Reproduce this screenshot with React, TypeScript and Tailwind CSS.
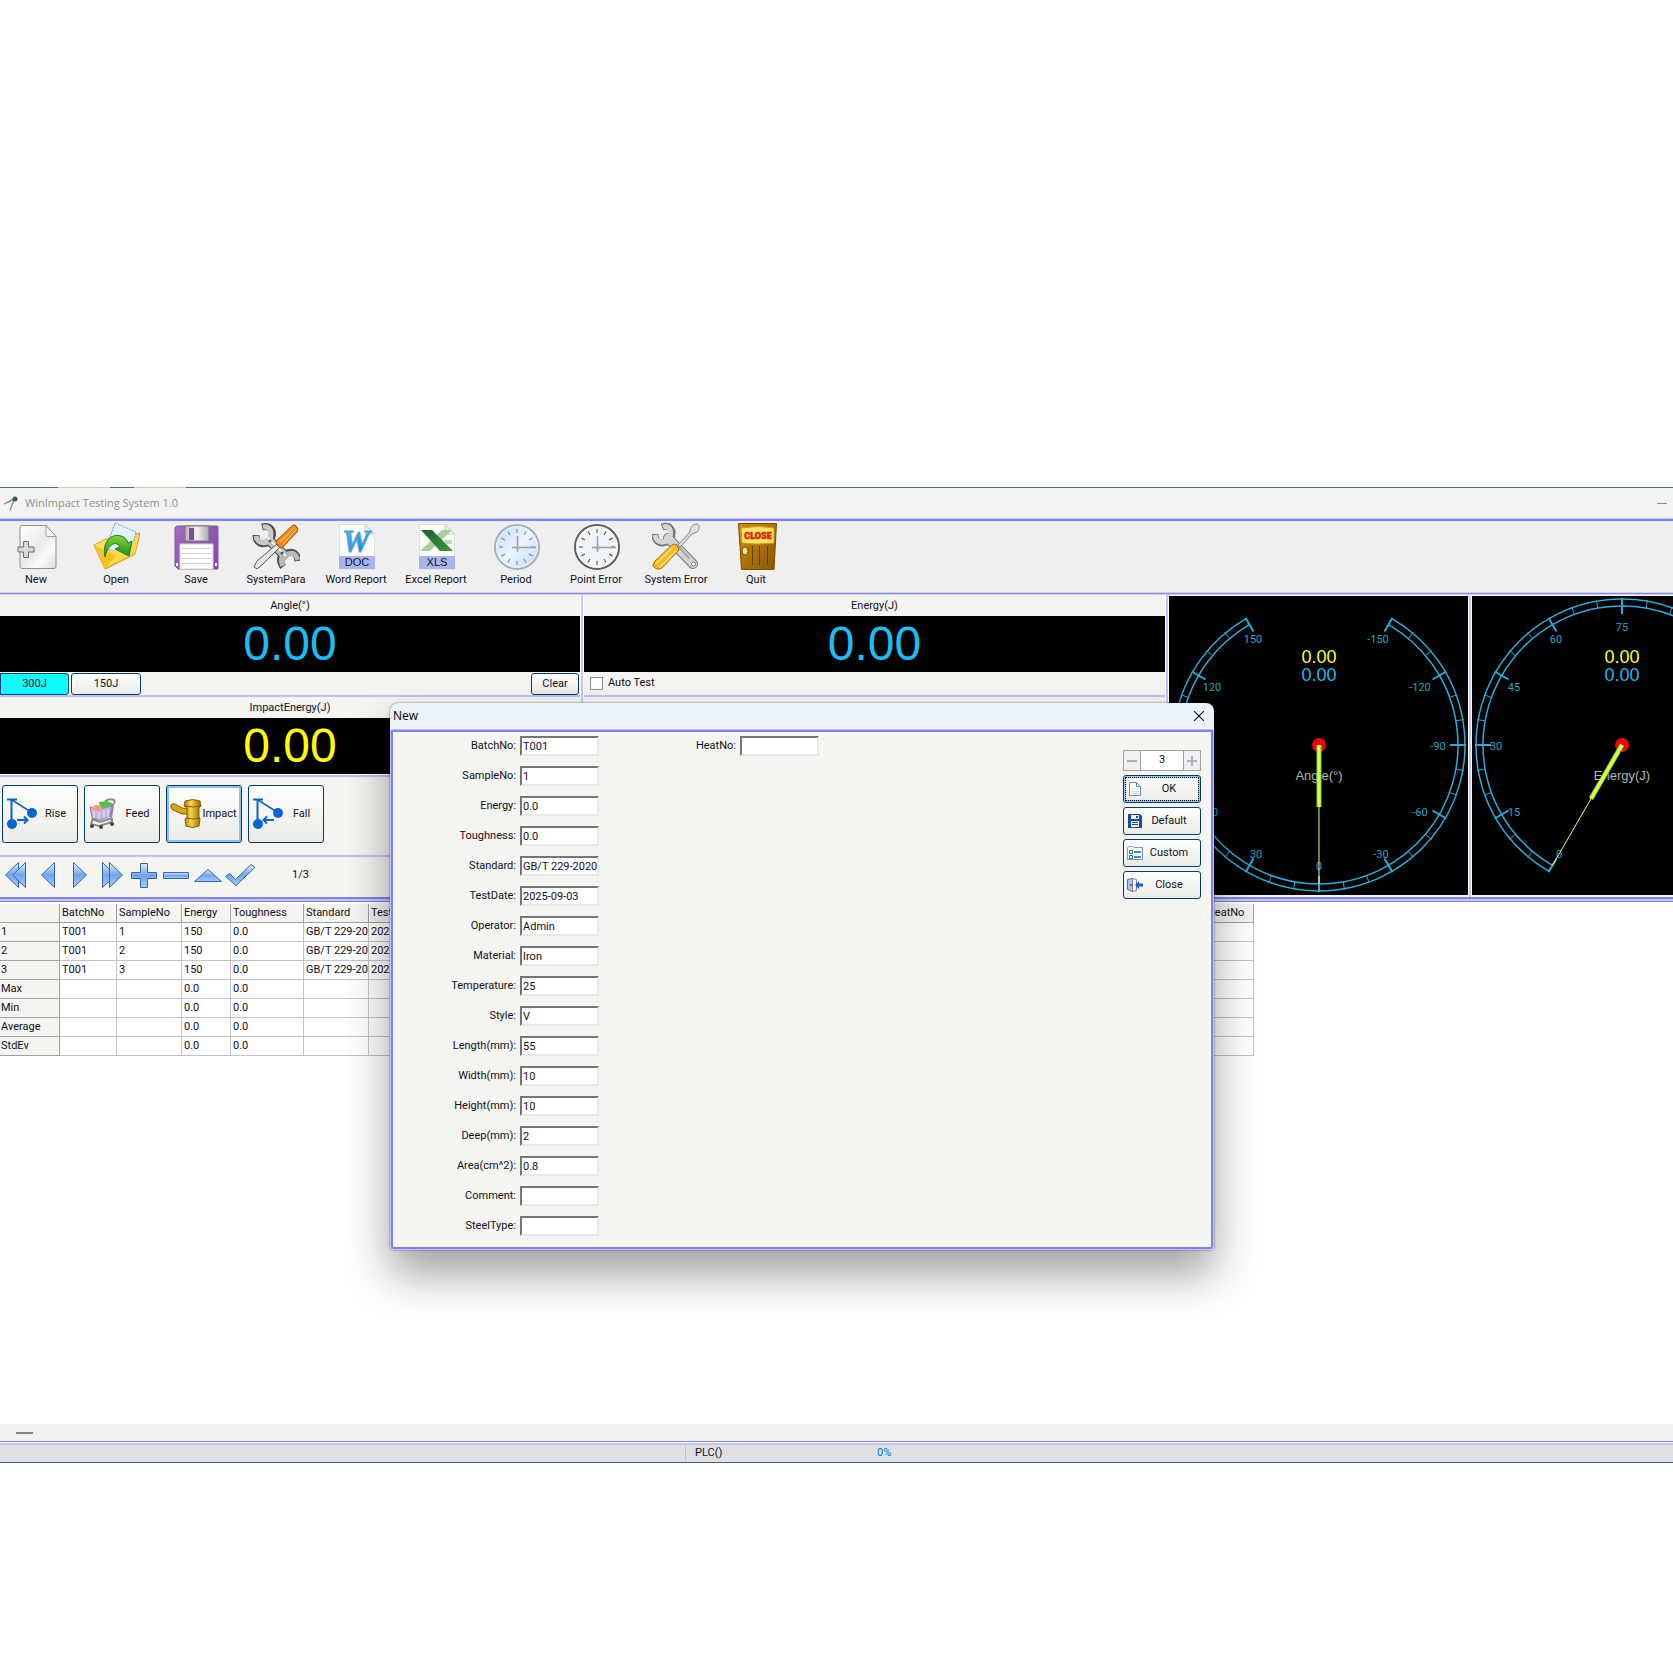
import type { ReactNode } from 'react';

const fields = [
  { label: 'BatchNo', value: 'T001' },
  { label: 'SampleNo', value: '1' },
  { label: 'Energy', value: '0.0' },
  { label: 'Toughness', value: '0.0' },
  { label: 'Standard', value: 'GB/T 229-2020' },
  { label: 'TestDate', value: '2025-09-03' },
  { label: 'Operator', value: 'Admin' },
  { label: 'Material', value: 'Iron' },
  { label: 'Temperature', value: '25' },
  { label: 'Style', value: 'V' },
  { label: 'Length(mm)', value: '55' },
  { label: 'Width(mm)', value: '10' },
  { label: 'Height(mm)', value: '10' },
  { label: 'Deep(mm)', value: '2' },
  { label: 'Area(cm^2)', value: '0.8' },
  { label: 'Comment', value: '' },
  { label: 'SteelType', value: '' },
];

const columns = [
  { name: '', width: 60 },
  { name: 'BatchNo', width: 57 },
  { name: 'SampleNo', width: 65 },
  { name: 'Energy', width: 49 },
  { name: 'Toughness', width: 73 },
  { name: 'Standard', width: 65 },
  { name: 'TestDate', width: 70 },
  { name: 'Operator', width: 70 },
  { name: 'Material', width: 70 },
  { name: 'Temperature', width: 70 },
  { name: 'Style', width: 70 },
  { name: 'Length(mm)', width: 70 },
  { name: 'Width(mm)', width: 70 },
  { name: 'Height(mm)', width: 70 },
  { name: 'Deep(mm)', width: 69 },
  { name: 'Area(cm^2)', width: 69 },
  { name: 'Comment', width: 69 },
  { name: 'SteelType', width: 69 },
  { name: 'HeatNo', width: 49 },
];

const sampleRow = (no: string) => [
  no, 'T001', no, '150', '0.0', 'GB/T 229-2020', '2025-09-03', 'Admin', 'Iron', '25', 'V', '55', '10', '10', '2', '0.8', '', '', '',
];
const statRow = (name: string) => [name, '', '', '0.0', '0.0', '', '', '', '', '', '', '', '', '', '', '', '', '', ''];

const rows = [
  sampleRow('1'),
  sampleRow('2'),
  sampleRow('3'),
  statRow('Max'),
  statRow('Min'),
  statRow('Average'),
  statRow('StdEv'),
];

/* ---------- Toolbar icons ---------- */

const NewIcon = () => (
  <svg width="48" height="48" viewBox="0 0 48 48">
    <defs>
      <linearGradient id="newPage" x1="0" y1="0" x2="1" y2="1">
        <stop offset="0" stopColor="#ffffff" />
        <stop offset="0.5" stopColor="#e9e9e9" />
        <stop offset="0.7" stopColor="#fbfbfb" />
        <stop offset="1" stopColor="#dcdcdc" />
      </linearGradient>
    </defs>
    <path d="M10 3.500h24l10 11v30a2 2 0 0 1-2 2H10a2 2 0 0 1-2-2v-39a2 2 0 0 1 2-2z" fill="url(#newPage)" stroke="#8f8f8f" />
    <path d="M34 3.500v9q0 2 2 2h8z" fill="#f8f8f8" stroke="#9a9a9a" />
    <path d="M11.500 19.500h5v5.500h5.500v5h-5.500v5.500h-5v-5.500H6v-5h5.500z" fill="#dadada" stroke="#6d6d6d" />
  </svg>
);

const OpenIcon = () => (
  <svg width="48" height="48" viewBox="0 0 48 48">
    <defs>
      <linearGradient id="openFolder" x1="0" y1="0" x2="1" y2="1">
        <stop offset="0" stopColor="#ffef8a" />
        <stop offset="0.6" stopColor="#fcd12c" />
        <stop offset="1" stopColor="#f0a814" />
      </linearGradient>
      <linearGradient id="openArrow" x1="0" y1="0" x2="0" y2="1">
        <stop offset="0" stopColor="#7fd63a" />
        <stop offset="1" stopColor="#1f8c1c" />
      </linearGradient>
    </defs>
    <path d="M2 23L14 17 40 13 48 11 43 32 13 47z" fill="url(#openFolder)" stroke="#d79a1c" />
    <path d="M23 1L44 10 38 33 14 27z" fill="#e4f2fd" stroke="#63a3d8" strokeDasharray="2 1" />
    <path d="M12 30L38 26 47 11 43 33 13 47 8 34z" fill="#fbd94e" opacity="0.9" />
    <path d="M2 23L13 47 24 34z" fill="#f9c21e" />
    <path d="M13 47L43 32" stroke="#d79a1c" fill="none" />
    <path d="M13 35C10 20 19 11 29 14c4 1 6 4 7 7l4-2-3 15-14-7 5-2c-4-7-12-3-15 10z" fill="url(#openArrow)" stroke="#1c7a18" />
  </svg>
);

const SaveIcon = () => (
  <svg width="48" height="48" viewBox="0 0 48 48">
    <defs>
      <linearGradient id="saveBody" x1="0" y1="0" x2="1" y2="1">
        <stop offset="0" stopColor="#a06cc0" />
        <stop offset="1" stopColor="#8347ab" />
      </linearGradient>
      <linearGradient id="saveShutter" x1="0" y1="0" x2="1" y2="0">
        <stop offset="0" stopColor="#b5b5b5" />
        <stop offset="0.5" stopColor="#f4f4f4" />
        <stop offset="1" stopColor="#a9a9a9" />
      </linearGradient>
    </defs>
    <path d="M3 5.500L5 4h40a1 1 0 0 1 1 1v42H6l-3-3z" fill="url(#saveBody)" stroke="#8450a8" />
    <rect x="13" y="4" width="24" height="15" fill="url(#saveShutter)" stroke="#777" />
    <rect x="17" y="6" width="5" height="12" fill="#7c4f9c" />
    <rect x="8" y="22" width="33" height="25" fill="#fff" stroke="#d9cfe2" />
    <path d="M10 26.500h29M10 31.500h29M10 36.500h29M10 41.500h29" stroke="#d0d0da" />
    <rect x="4" y="41" width="2" height="3" fill="#fff" />
    <rect x="43" y="41" width="2" height="3" fill="#fff" />
  </svg>
);

const SystemParaIcon = () => (
  <svg width="48" height="48" viewBox="0 0 48 48">
    <g fill="none" strokeLinecap="butt">
      <path d="M15 16L35 36" stroke="#4c4c4c" strokeWidth="10" />
      <path d="M4 13C4 21 10 24 17 20M10 5C18 3 23 9 19 17" stroke="#4c4c4c" strokeWidth="7" />
      <path d="M31 45C26 38 29 30 36 31M46 39C45 31 41 29 36 31" stroke="#4c4c4c" strokeWidth="7" />
      <path d="M15 16L35 36" stroke="#bdbdbd" strokeWidth="8" />
      <path d="M4 14C5 20 11 23 17 19M11 5C17 4 21 9 18 17" stroke="#c9c9c9" strokeWidth="5" />
      <path d="M31 44C28 38 29 32 36 32M46 38C44 32 41 30 36 32" stroke="#b8b8b8" strokeWidth="5" />
      <path d="M14 14L34 34" stroke="#efefef" strokeWidth="2" />
      <circle cx="18" cy="19" r="1.500" fill="#555" />
      <circle cx="30" cy="31" r="1.500" fill="#555" />
    </g>
    <path d="M25 22l3 3L10 43l-5 4-3-2 3-6z" fill="#e6e6e6" stroke="#5b5b5b" />
    <path d="M24 19L40 4c2-3 8 2 5 6L30 26q-5-1-6-7z" fill="#f08a1d" stroke="#9c4d08" />
    <path d="M28 20L42 6M30 23L44 8" stroke="#ffc77a" strokeWidth="1" />
  </svg>
);

const SheetIcon = ({ kind }: { kind: 'DOC' | 'XLS' }) => (
  <svg width="48" height="48" viewBox="0 0 48 48">
    <defs>
      <linearGradient id="wordBlue" x1="0" y1="0" x2="1" y2="1">
        <stop offset="0" stopColor="#5fc0ea" />
        <stop offset="1" stopColor="#1670b8" />
      </linearGradient>
      <linearGradient id="excelGreen" x1="0" y1="0" x2="1" y2="1">
        <stop offset="0" stopColor="#1f5f2c" />
        <stop offset="1" stopColor="#3f9a3c" />
      </linearGradient>
    </defs>
    <path d="M7.500 2.500H33L42.500 12v35h-35z" fill="#fdfdfd" stroke="#e0e0e6" />
    <path d="M33 2.500V12h9.500z" fill="#f0f0f0" stroke="#cfcfcf" />
    {kind === 'DOC' ? (
      <text x="24" y="30" textAnchor="middle" fontFamily="Liberation Serif, serif" fontStyle="italic" fontWeight="700" fontSize="31" fill="url(#wordBlue)" stroke="#4aa8dc">
        W
      </text>
    ) : (
      <g>
        <path d="M30 8h10L18 29H8z" fill="#a9cf9f" />
        <path d="M9 8h11l21 21H28z" fill="url(#excelGreen)" />
        <path d="M31 18l9 0 0 4-6 0z" fill="#bcdcb2" />
      </g>
    )}
    <rect x="7" y="34" width="36" height="13" fill="#a9b5ea" />
    <text x="25" y="44" textAnchor="middle" fontFamily="Liberation Sans, sans-serif" fontSize="11" fill="#101028">
      {kind}
    </text>
  </svg>
);

const ClockIcon = ({ face, rim, tick, id }: { face: string; rim: string; tick: string; id: string }) => (
  <svg width="48" height="48" viewBox="0 0 48 48">
    <defs>
      <linearGradient id={id} x1="0" y1="0" x2="1" y2="1">
        <stop offset="0" stopColor={face} />
        <stop offset="0.5" stopColor="#eef4fb" />
        <stop offset="1" stopColor={face} />
      </linearGradient>
    </defs>
    <circle cx="25" cy="25" r="22" fill={`url(#${id})`} stroke={rim} strokeWidth="2" />
    <circle cx="25" cy="25" r="20.500" fill="none" stroke="#fff" strokeOpacity="0.6" />
    {[0, 30, 60, 90, 120, 150, 180, 210, 240, 270, 300, 330].map((deg) => (
      <line key={deg} x1="25" y1="7" x2="25" y2="11" stroke={tick} transform={`rotate(${deg} 25 25)`} />
    ))}
    <path d="M25.500 14v16M20 25.500h24" stroke="#9a9ea6" strokeWidth="1.500" fill="none" />
    <circle cx="25.500" cy="25.500" r="2" fill="#a8adb5" />
  </svg>
);

const SystemErrorIcon = () => (
  <svg width="48" height="48" viewBox="0 0 48 48">
    <g fill="none">
      <path d="M16 16L41 42" stroke="#777" strokeWidth="10" strokeLinecap="round" />
      <path d="M3 12C3 21 10 23 17 19M10 5C18 2 23 9 18 17" stroke="#777" strokeWidth="7" />
      <path d="M16 16L41 42" stroke="#d2d2d2" strokeWidth="8" strokeLinecap="round" />
      <path d="M3 13C4 20 10 22 17 18M11 5C17 3 21 9 17 17" stroke="#d6d6d6" strokeWidth="5" />
      <path d="M24 22L37 36" stroke="#a5a5a5" strokeWidth="2" />
      <circle cx="41.500" cy="42" r="2" fill="#fff" stroke="#777" />
    </g>
    <path d="M26 23L38 10c0-5 3-8 7-8 3 1 3 5 0 8l-5 2-12 13z" fill="#e0e0e0" stroke="#888" />
    <path d="M21 22q5 0 6 6L10 46q-5 3-9-2 0-3 2-5z" fill="#f9b81c" stroke="#a97208" />
    <path d="M20 26L4 42M24 29L8 45" stroke="#ffe08a" strokeWidth="1.500" />
  </svg>
);

const QuitIcon = () => (
  <svg width="48" height="48" viewBox="0 0 48 48">
    <defs>
      <linearGradient id="door" x1="0" y1="0" x2="1" y2="1">
        <stop offset="0" stopColor="#cf8d10" />
        <stop offset="1" stopColor="#8a5604" />
      </linearGradient>
    </defs>
    <path d="M6.500 1.500h38L42 47.500H9.500z" fill="url(#door)" stroke="#7a4a05" />
    <path d="M9 6q17-3 33 0v15q-17 2-32 0z" fill="#ffe66b" stroke="#d99a10" />
    <path d="M20.500 24v19M27.500 24v19M35.500 24v19" stroke="#5e3a02" />
    <ellipse cx="13" cy="29" rx="3" ry="4" fill="#ffe48a" stroke="#7a4a05" />
    <text x="26" y="17" textAnchor="middle" fontFamily="Roboto, sans-serif" fontWeight="900" fontSize="9" fill="#e0240a" stroke="#e0240a" strokeWidth="0.500">
      CLOSE
    </text>
  </svg>
);

const tools: { label: string; icon: ReactNode }[] = [
  { label: 'New', icon: <NewIcon /> },
  { label: 'Open', icon: <OpenIcon /> },
  { label: 'Save', icon: <SaveIcon /> },
  { label: 'SystemPara', icon: <SystemParaIcon /> },
  { label: 'Word Report', icon: <SheetIcon kind="DOC" /> },
  { label: 'Excel Report', icon: <SheetIcon kind="XLS" /> },
  { label: 'Period', icon: <ClockIcon id="clockBlue" face="#b9dafb" rim="#a3b0bf" tick="#5b87b8" /> },
  { label: 'Point Error', icon: <ClockIcon id="clockGrey" face="#f6f6f6" rim="#5f5f5f" tick="#444444" /> },
  { label: 'System Error', icon: <SystemErrorIcon /> },
  { label: 'Quit', icon: <QuitIcon /> },
];

/* ---------- Action button icons ---------- */

const PendulumIcon = ({ down }: { down?: boolean }) => (
  <svg width="32" height="32" viewBox="0 0 32 32" className="shrink-0">
    <path d="M1 1.500h10" stroke="#0a64c8" strokeWidth="2" />
    <path d="M5.500 2v24" stroke="#0a64c8" strokeWidth="2" />
    <path d="M6 2L25 14" stroke="#0a64c8" strokeWidth="1.500" />
    <circle cx="26" cy="15" r="5" fill="#0a64d2" />
    <circle cx="6" cy="26" r="5" fill="#0a64d2" />
    {down ? (
      <path d="M22 22H12M15 18.500L11.500 22l3.500 3.500" fill="none" stroke="#0a64c8" strokeWidth="2" />
    ) : (
      <path d="M11 22h10M18 18.500l3.500 3.500-3.500 3.500" fill="none" stroke="#0a64c8" strokeWidth="2" />
    )}
  </svg>
);

const FeedIcon = () => (
  <svg width="32" height="32" viewBox="0 0 32 32" className="shrink-0">
    <path d="M17 3q5-3 9-1 2 3-2 5" fill="none" stroke="#8e8e8e" strokeWidth="2" />
    <path d="M11 4l8-1 5 2-1 8-10 1z" fill="#54c63e" />
    <path d="M2 9l9 2 12-3 1-2-2 12-10 4-8-2z" fill="#c0b4e4" stroke="#8f7fc0" />
    <ellipse cx="9" cy="10" rx="5" ry="3" fill="#f5a26a" />
    <path d="M6 13v7M11 14v7M16 12v8M20 11v8" stroke="#efe9fc" />
    <path d="M25 7l-2 13M4 21l8 3 12-4M3 26l8 2 13-4M5 20l-2 6M24 20v4" fill="none" stroke="#8a8a8a" strokeWidth="2" />
    <circle cx="4" cy="28" r="2" fill="#444" />
    <circle cx="13" cy="29" r="2" fill="#444" />
    <circle cx="24" cy="26" r="2" fill="#444" />
  </svg>
);

const HammerIcon = () => (
  <svg width="32" height="32" viewBox="0 0 32 32" className="shrink-0">
    <defs>
      <linearGradient id="gold" x1="0" y1="0" x2="1" y2="0">
        <stop offset="0" stopColor="#a87400" />
        <stop offset="0.4" stopColor="#f6d64c" />
        <stop offset="1" stopColor="#9a6600" />
      </linearGradient>
    </defs>
    <path d="M1 7q-1 4 2 5l9 4 6 0v-5l-6-1-7-4q-3-1-4 1z" fill="#d9a514" stroke="#8a5f00" />
    <path d="M15 3q8-3 15 0l1 5-2 2v9l1 2-1 7q-6 3-13 0l-1-7 2-2v-9l-3-2z" fill="url(#gold)" stroke="#8a5f00" />
    <path d="M15 8q8 2 16 0M16 20q7 2 14 0" fill="none" stroke="#8a5f00" />
  </svg>
);

const actions = [
  { label: 'Rise', icon: <PendulumIcon />, active: false },
  { label: 'Feed', icon: <FeedIcon />, active: false },
  { label: 'Impact', icon: <HammerIcon />, active: true },
  { label: 'Fall', icon: <PendulumIcon down />, active: false },
];

/* ---------- Record navigator ---------- */

const navShapes = [
  { label: 'First', d: ['M18.500 2.500v25L5.500 15z', 'M25.500 2.500v25L12.500 15z'] },
  { label: 'Previous', d: ['M22.500 2.500v25L9.500 15z'] },
  { label: 'Next', d: ['M9.500 2.500v25L22.500 15z'] },
  { label: 'Last', d: ['M6.500 2.500v25L19.500 15z', 'M13.500 2.500v25L26.500 15z'] },
  { label: 'Add', d: ['M12.500 3.500h7v9h9v6h-9v9h-7v-9h-9v-6h9z'] },
  { label: 'Remove', d: ['M3.500 12.500h25v6h-25z'] },
  { label: 'Edit', d: ['M2.500 21.500L16 9.500l13.500 12z'] },
  { label: 'Apply', d: ['M1.500 16.500l4-3 6 6L27 4.500l4 3-19 18z'] },
];

const NavIcon = ({ shapes }: { shapes: string[] }) => (
  <svg width="32" height="30" viewBox="0 0 32 30">
    <defs>
      <linearGradient id="navFill" x1="0" y1="0" x2="0" y2="1">
        <stop offset="0" stopColor="#e3f0fd" />
        <stop offset="0.5" stopColor="#6ea6ec" />
        <stop offset="1" stopColor="#a9cdf6" />
      </linearGradient>
    </defs>
    {shapes.map((d) => (
      <path key={d} d={d} fill="url(#navFill)" stroke="#3564b4" strokeLinejoin="round" />
    ))}
  </svg>
);

/* ---------- Gauges ---------- */

type GaugeLabel = { text: string; x: number; y: number };

const angleLabels: GaugeLabel[] = [
  { text: '150', x: 84, y: 44 },
  { text: '120', x: 43, y: 92 },
  { text: '90', x: 30, y: 151 },
  { text: '60', x: 43, y: 217 },
  { text: '30', x: 87, y: 259 },
  { text: '0', x: 150, y: 271 },
  { text: '-30', x: 212, y: 259 },
  { text: '-60', x: 251, y: 217 },
  { text: '-90', x: 269, y: 151 },
  { text: '-120', x: 251, y: 92 },
  { text: '-150', x: 209, y: 44 },
];

const energyLabels: GaugeLabel[] = [
  { text: '0', x: 87, y: 259 },
  { text: '15', x: 42, y: 217 },
  { text: '30', x: 24, y: 151 },
  { text: '45', x: 42, y: 92 },
  { text: '60', x: 84, y: 44 },
  { text: '75', x: 150, y: 32 },
];

const CX = 150;
const CY = 149;

// degrees run clockwise from the bottom of the dial
const polar = (radius: number, deg: number) => {
  const rad = (deg * Math.PI) / 180;
  return { x: CX - radius * Math.sin(rad), y: CY + radius * Math.cos(rad) };
};

const arc = (radius: number, from: number, to: number) => {
  const a = polar(radius, from);
  const b = polar(radius, to);
  return `M${a.x} ${a.y}A${radius} ${radius} 0 ${to - from > 180 ? 1 : 0} 1 ${b.x} ${b.y}`;
};

const Gauge = ({ title, from, needle, labels }: { title: string; from: number; needle: number; labels: GaugeLabel[] }) => {
  const ticks = Array.from({ length: 31 }, (_, i) => from + i * 10);
  const mid = polar(62, needle);
  const tip = polar(139, needle);

  return (
    <svg width="299" height="299" viewBox="0 0 299 299" className="block shrink-0 bg-black" role="img" aria-label={title}>
      <g fill="none" stroke="#2cacdc">
        <path d={arc(146, from, from + 300)} strokeWidth="1.500" />
        <path d={arc(139, from, from + 300)} strokeWidth="1.500" />
        {ticks.map((deg, i) => {
          const major = i % 3 === 0;
          const a = polar(major ? 131 : 139, deg);
          const b = polar(147, deg);
          return <line key={deg} x1={a.x} y1={a.y} x2={b.x} y2={b.y} strokeWidth={major ? 2 : 1} />;
        })}
      </g>
      <g fontFamily="Roboto, sans-serif" fontSize="11" fill="#28a4c8" textAnchor="middle">
        {labels.map((l) => (
          <text key={l.text} x={l.x} y={l.y + 3}>
            {l.text}
          </text>
        ))}
      </g>
      <g fontFamily="Liberation Sans, Arial, sans-serif" textAnchor="middle">
        <text x="150" y="67" fontSize="18" fill="#ffff20">0.00</text>
        <text x="150" y="85" fontSize="18" fill="#20b8ec">0.00</text>
        <text x="150" y="184" fontSize="13" fill="#b4b4b4">{title}</text>
      </g>
      <circle cx={CX} cy={CY} r="7" fill="#f00808" />
      <line x1={CX} y1={CY} x2={tip.x} y2={tip.y} stroke="#f8f868" />
      <line x1={CX} y1={CY} x2={mid.x} y2={mid.y} stroke="#50d890" strokeWidth="5" />
      <line x1={CX} y1={CY} x2={mid.x} y2={mid.y} stroke="#f0ff20" strokeWidth="3" />
    </svg>
  );
};

/* ---------- Small building blocks ---------- */

const HLine = () => <div className="h-0.5 bg-[#c0c0fa]" />;

const VLine = () => <div className="w-1 shrink-0 border-x border-white bg-[#c6c4f6]" />;

const Readout = ({ label, value, color }: { label: string; value: string; color: string }) => (
  <div>
    <div className="h-[21px] text-center leading-[22px]">{label}</div>
    <div className={`h-14 bg-black text-center font-['Liberation_Sans',Arial,sans-serif] text-5xl leading-[56px] ${color}`}>{value}</div>
  </div>
);

const buttonBase = 'rounded-[3px] border border-[#003c74] bg-linear-to-b from-white to-[#ebeae5]';

/* ---------- Dialog ---------- */

const PageIcon = () => (
  <svg width="14" height="16" viewBox="0 0 14 16">
    <path d="M1.500 1.500h7l4 4v9h-11z" fill="#fff" stroke="#5b8fc6" />
    <path d="M8.500 1.500v4h4" fill="none" stroke="#5b8fc6" />
    <path d="M3 8h8M3 10.500h8M3 12.500h8" stroke="#d2dfee" />
  </svg>
);

const DiskIcon = () => (
  <svg width="14" height="14" viewBox="0 0 14 14">
    <path d="M0 0h12l2 2v12H0z" fill="#0c4fb0" />
    <rect x="3" y="1" width="8" height="4" fill="#fff" />
    <rect x="8" y="2" width="2" height="2" fill="#0c4fb0" />
    <rect x="3" y="7" width="8" height="6" fill="#fff" />
    <path d="M4 8.500h6M4 10.500h6" stroke="#0c4fb0" />
  </svg>
);

const FormIcon = () => (
  <svg width="16" height="16" viewBox="0 0 16 16">
    <path d="M.5 14.500v-12l2-1h3l2 1h8v12z" fill="#f4f9ff" stroke="#6d9ccb" />
    <rect x="2.500" y="5.500" width="3" height="3" fill="#fff" stroke="#3b74ad" />
    <rect x="2.500" y="10.500" width="3" height="3" fill="#fff" stroke="#3b74ad" />
    <path d="M7 7h7M7 12h7" stroke="#2a5f98" strokeWidth="1.500" />
  </svg>
);

const ExitIcon = () => (
  <svg width="16" height="16" viewBox="0 0 16 16">
    <path d="M.5 2.500l5-1v13l-5-2z" fill="#a9c6e6" stroke="#4b77a8" />
    <path d="M5.500 1.500l4 1v11l-4 1z" fill="#fff6dc" stroke="#8c7ab0" />
    <circle cx="4" cy="8" r="1" fill="#2b4f7c" />
    <path d="M8 8l4-4v2.500h4v3h-4V12z" fill="#0a62c4" />
  </svg>
);

const dialogButtons = [
  { label: 'OK', icon: <PageIcon />, focused: true },
  { label: 'Default', icon: <DiskIcon />, focused: false },
  { label: 'Custom', icon: <FormIcon />, focused: false },
  { label: 'Close', icon: <ExitIcon />, focused: false },
];

const Field = ({ label, value }: { label: string; value: string }) => (
  <div className="flex h-5 w-[220px] items-center gap-1">
    <label htmlFor={label} className="w-[123px] text-right">
      {label}:
    </label>
    <input
      id={label}
      defaultValue={value}
      className="h-5 w-[79px] border-2 border-t-[#757575] border-r-[#e8e8e8] border-b-[#e8e8e8] border-l-[#757575] bg-white pl-px outline-none"
    />
  </div>
);

const NewDialog = () => (
  <div
    role="dialog"
    aria-label="New"
    className="absolute top-[216px] left-[390px] w-[824px] rounded-t-lg rounded-b-[4px] bg-[#ebf3f8] shadow-[0_24px_46px_rgba(0,0,0,0.38),0_0_2px_rgba(0,0,0,0.6)]"
  >
    <div className="flex h-[26px] items-center justify-between pr-2.5 pl-[3px] font-['Open_Sans',sans-serif] text-xs text-black">
      <span>New</span>
      <button aria-label="Close dialog">
        <svg width="10" height="10" viewBox="0 0 10 10">
          <path d="M0 0l10 10M10 0L0 10" stroke="#111" strokeWidth="1.200" />
        </svg>
      </button>
    </div>
    <div className="rounded-b-[4px] border border-[#c0c0fa]">
      <div className="flex justify-between rounded-b-[3px] border-2 border-[#8080ee] bg-[#f4f4f0] pb-[11px]">
        <div className="flex pt-1">
          <div className="flex flex-col gap-2.5">
            {fields.map((f) => (
              <Field key={f.label} {...f} />
            ))}
          </div>
          <Field label="HeatNo" value="" />
        </div>

        {/* Spinner and dialog actions */}
        <div className="mr-2.5 flex w-[78px] flex-col gap-1 pt-[18px]">
          <div className="flex h-[21px] border border-[#a0a0a0] bg-[#f0f0f0]">
            <button aria-label="Decrease" className="flex w-4 items-center justify-center">
              <span className="h-0.5 w-2.5 bg-[#9ab4cc]" />
            </button>
            <input aria-label="Count" defaultValue="3" className="w-11 flex-1 border-x border-[#a0a0a0] bg-white text-center outline-none" />
            <button aria-label="Increase" className="flex w-4 items-center justify-center">
              <svg width="10" height="10" viewBox="0 0 10 10">
                <path d="M0 5h10M5 0v10" stroke="#9ab4cc" strokeWidth="2" />
              </svg>
            </button>
          </div>
          {dialogButtons.map((b) => (
            <button
              key={b.label}
              className={`${buttonBase} flex h-7 items-center ${b.focused ? 'shadow-[inset_0_0_0_2px_#9cc4ee] outline-1 -outline-offset-3 outline-dotted outline-black' : ''}`}
            >
              <span className="flex w-[22px] items-center justify-center">{b.icon}</span>
              <span className="flex-1 pr-2 text-center">{b.label}</span>
            </button>
          ))}
        </div>
      </div>
    </div>
  </div>
);

/* ---------- Main window ---------- */

const App = () => {
  return (
    <div className="min-h-screen overflow-hidden bg-white pt-[487px] font-['Roboto',sans-serif] text-[11px] text-[#101018]">
      <div className="relative">
        {/* Title bar */}
        <div className="flex h-px bg-[#3f7590]">
          <span className="ml-[58px] w-[52px] bg-[#dcc9a4]" />
          <span className="ml-6 w-[52px] bg-[#dcc9a4]" />
        </div>
        <header className="flex h-[30px] items-center gap-[7px] bg-[#f3f3f3] pr-1.5 pl-1 font-['Open_Sans',sans-serif] text-[#8e8e8e]">
          <svg width="14" height="14" viewBox="0 0 14 14">
            <path d="M0 8L10 3M10 4L6 14" stroke="#8890a0" strokeWidth="1.500" fill="none" />
            <circle cx="11" cy="3" r="2.500" fill="#2c6c3c" />
          </svg>
          <span className="flex-1">WinImpact Testing System 1.0</span>
          <button aria-label="Minimize" className="h-px w-2.5 bg-[#8e8e8e]" />
        </header>
        <div className="h-[3px] border-t border-[#c0c0fa] bg-[#8080ee]" />

        {/* Toolbar */}
        <nav className="flex h-[71px] gap-2 bg-[#efefef] pt-px">
          {tools.map((t) => (
            <button key={t.label} className="flex w-[72px] flex-col items-center whitespace-nowrap">
              {t.icon}
              <span className="leading-5">{t.label}</span>
            </button>
          ))}
        </nav>
        <div className="h-[3px] border-y border-[#d0d0fa] bg-[#8a88e6]" />

        {/* Readouts, actions and gauges */}
        <section className="flex h-[302px] overflow-hidden bg-[#f4f4f0]">
          <div className="flex flex-1">
            <div className="flex-[580]">
              <Readout label="Angle(°)" value="0.00" color="text-[#1cbcf4]" />
              <div className="flex h-[23px] items-end gap-0.5 pr-px">
                <button className="h-[22px] w-[69px] rounded-r-[3px] border border-[#003c74] bg-[#10fcfc]">300J</button>
                <button className={`${buttonBase} h-[22px] w-[70px]`}>150J</button>
                <button className={`${buttonBase} ml-auto h-[22px] w-12`}>Clear</button>
              </div>
              <HLine />
              <Readout label="ImpactEnergy(J)" value="0.00" color="text-[#ffff00]" />
              <div className="h-px bg-white" />
              <HLine />
              <div className="flex h-[78px] gap-1.5 pt-2 pl-0.5">
                {actions.map((a) => (
                  <button
                    key={a.label}
                    className={`${buttonBase} flex h-[58px] w-[76px] items-center pl-[3px] ${a.active ? 'shadow-[inset_0_0_0_2px_#8cc0ee]' : ''}`}
                  >
                    {a.icon}
                    <span className="flex-1 pr-1 text-center">{a.label}</span>
                  </button>
                ))}
              </div>
              <HLine />
              <div className="flex h-9 items-center">
                {navShapes.map((n) => (
                  <button key={n.label} aria-label={n.label}>
                    <NavIcon shapes={n.d} />
                  </button>
                ))}
                <span className="ml-9">1/3</span>
              </div>
            </div>
            <VLine />
            <div className="flex-[581]">
              <Readout label="Energy(J)" value="0.00" color="text-[#1cbcf4]" />
              <label className="flex h-[23px] items-center gap-[5px] pl-1.5">
                <input type="checkbox" className="size-[13px] appearance-none border border-[#8e8f8f] bg-white" />
                Auto Test
              </label>
              <HLine />
            </div>
            <VLine />
          </div>
          <div className="flex pt-px">
            <Gauge title="Angle(°)" from={-150} needle={0} labels={angleLabels} />
            <VLine />
            <div className="w-[201px] overflow-hidden">
              <Gauge title="Energy(J)" from={30} needle={30} labels={energyLabels} />
            </div>
          </div>
        </section>
        <div className="h-[5px] border-t-2 border-b border-t-[#8080ee] border-b-[#8080ee] bg-[#c8c8fc]" />
        <div className="h-0.5 bg-white" />

        {/* Results table */}
        <section className="min-h-[520px] overflow-hidden bg-white">
          <table className="w-[1254px] table-fixed border-separate border-spacing-0 text-left">
            <colgroup>
              {columns.map((c) => (
                <col key={c.name} style={{ width: c.width }} />
              ))}
            </colgroup>
            <thead>
              <tr>
                {columns.map((c) => (
                  <th key={c.name} className="h-[19px] overflow-hidden border-r border-b border-[#a0a0a0] bg-[#f4f4f0] p-0 pl-0.5 leading-[18px] font-normal whitespace-nowrap">
                    {c.name}
                  </th>
                ))}
              </tr>
            </thead>
            <tbody>
              {rows.map((row) => (
                <tr key={row[0]}>
                  {row.map((cell, i) =>
                    i === 0 ? (
                      <th key={i} className="h-[19px] border-r border-b border-[#a0a0a0] bg-[#f4f4f0] p-0 pl-px leading-[18px] font-normal">
                        {cell}
                      </th>
                    ) : (
                      <td key={i} className="h-[19px] overflow-hidden border-r border-b border-[#c4c4c4] p-0 pl-0.5 leading-[18px] whitespace-nowrap">
                        {cell}
                      </td>
                    ),
                  )}
                </tr>
              ))}
            </tbody>
          </table>
        </section>

        {/* Horizontal scroll strip */}
        <div className="flex h-[17px] items-center bg-[#f0f0f0] pl-4">
          <span className="h-0.5 w-[17px] bg-[#888888]" />
        </div>
        <div className="h-1 border-t border-b-2 border-t-[#8888c4] border-b-[#c4c4f4] bg-white" />

        {/* Status bar */}
        <footer className="flex h-[18px] items-center border-b border-[#3c6878] bg-[#dfe0e4]">
          <span className="h-4 w-[686px] border-r border-[#c4c4c8]" />
          <span className="w-[191px] pl-[9px]">PLC()</span>
          <span className="text-[#0078c8]">0%</span>
        </footer>

        <NewDialog />
      </div>
    </div>
  );
};

export default App;
